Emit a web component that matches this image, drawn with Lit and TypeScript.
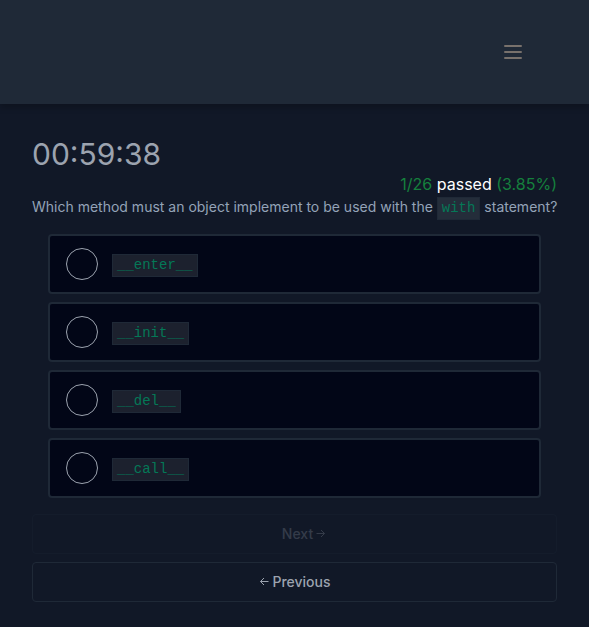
import { LitElement, html, css } from "lit";
import { customElement, state } from "lit/decorators.js";

@customElement("app-root")
export class AppRoot extends LitElement {
  static styles = css`
    :host {
      display: block;
      min-height: 100vh;
      background: #111827;
      color: #94a3b8;
      font-family: Inter, sans-serif;
      font-size: 14px;
      line-height: 20px;
    }
    * {
      box-sizing: border-box;
    }
    .header {
      display: flex;
      justify-content: flex-end;
      align-items: center;
      height: 104px;
      padding: 0 64px;
      background: #1f2937;
      box-shadow: 0 4px 6px rgba(0, 0, 0, 0.2);
    }
    .menu {
      display: flex;
      padding: 0;
      border: 0;
      background: none;
      color: #78716c;
    }
    .main {
      padding: 32px 32px 24px;
    }
    .timer {
      color: #9ca3af;
      font-size: 30px;
      line-height: 36px;
    }
    .score {
      margin: 0;
      color: #fff;
      font-size: 16px;
      line-height: 24px;
      text-align: right;
    }
    .green {
      color: #15803d;
    }
    .quiz {
      margin: 0;
    }
    .question {
      margin: 0;
      line-height: 22px;
      white-space: nowrap;
    }
    code {
      padding: 2px 4px 3px;
      border: 1px solid #1f2937;
      background: #1c212e;
      color: #047857;
      font-family: "Liberation Mono", monospace;
      font-size: 14px;
      line-height: 15px;
    }
    .question code {
      background: #242d3a;
    }
    .options {
      display: flex;
      flex-direction: column;
      gap: 8px;
      padding: 16px;
    }
    .option {
      display: flex;
      align-items: center;
      gap: 14px;
      height: 60px;
      padding: 0 16px;
      border: 2px solid #1f2937;
      border-radius: 4px;
      background: #020617;
      cursor: pointer;
    }
    .radio {
      appearance: none;
      width: 32px;
      height: 32px;
      margin: 0;
      border: 1px solid #9ca3af;
      border-radius: 50%;
    }
    .radio:checked {
      background: #047857;
    }
    .actions {
      display: flex;
      flex-direction: column;
      gap: 8px;
    }
    .action {
      display: flex;
      justify-content: center;
      align-items: center;
      gap: 2px;
      height: 40px;
      border: 1px solid #1f2937;
      border-radius: 4px;
      background: none;
      color: #9ca3af;
      font: 500 14px/20px Inter, sans-serif;
    }
    .next {
      padding-left: 26px;
    }
    .action:disabled {
      opacity: 0.25;
    }
  `;

  @state() private selected = "";

  private options = ["__enter__", "__init__", "__del__", "__call__"];

  render() {
    return html`
      <header class="header">
        <button class="menu" aria-label="Menu">
          <svg width="24" height="24" viewBox="0 0 24 24" fill="none" stroke="currentColor" stroke-width="2" stroke-linecap="round">
            <path d="M4 6h16M4 12h16M4 18h16" />
          </svg>
        </button>
      </header>
      <main class="main">
        <div class="timer">00:59:38</div>
        <p class="score"><span class="green">1/26</span> passed <span class="green">(3.85%)</span></p>
        <form class="quiz">
          <p class="question" id="question">Which method must an object implement to be used with the <code>with</code> statement?</p>
          <div class="options" role="radiogroup" aria-labelledby="question">
            ${this.options.map(
              (name) => html`
                <label class="option">
                  <input class="radio" type="radio" name="answer" .value=${name} @change=${() => (this.selected = name)} />
                  <span><code>${name}</code></span>
                </label>
              `
            )}
          </div>
          <div class="actions">
            <button class="action next" type="button" ?disabled=${!this.selected}>
              Next
              <svg width="12" height="12" viewBox="0 0 12 12" fill="none" stroke="currentColor"><path d="M1.500 5.500h8M6 2l3.500 3.500L6 9" /></svg>
            </button>
            <button class="action" type="button">
              <svg width="12" height="12" viewBox="0 0 12 12" fill="none" stroke="currentColor"><path d="M10.500 5.500h-8M6 2L2.500 5.500 6 9" /></svg>
              Previous
            </button>
          </div>
        </form>
      </main>
    `;
  }
}
